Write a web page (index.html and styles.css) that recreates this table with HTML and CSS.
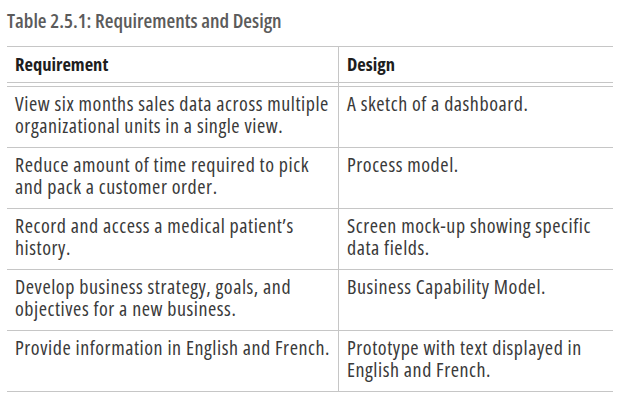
FILE: index.html
```html
<!DOCTYPE html>
<html lang="en">
<head>
<meta charset="utf-8">
<title>Table 2.5.1: Requirements and Design</title>
<link rel="stylesheet" href="styles.css">
</head>
<body>
<div class="page">
  <h1 class="caption">Table 2.5.1: Requirements and Design</h1>
  <table class="req-table">
    <thead>
      <tr><th class="col-req">Requirement</th><th class="col-des">Design</th></tr>
      <tr class="spacer"><td></td><td></td></tr>
    </thead>
    <tbody>
      <tr><td>View six months sales data across multiple organizational units in a single view.</td><td>A sketch of a dashboard.</td></tr>
      <tr><td>Reduce amount of time required to pick and pack a customer order.</td><td>Process model.</td></tr>
      <tr><td>Record and access a medical patient’s history.</td><td>Screen mock-up showing specific data fields.</td></tr>
      <tr><td>Develop business strategy, goals, and objectives for a new business.</td><td>Business Capability Model.</td></tr>
      <tr><td>Provide information in English and French.</td><td>Prototype with text displayed in English and French.</td></tr>
    </tbody>
  </table>
</div>
</body>
</html>
```
FILE: styles.css
```css
html, body { margin: 0; padding: 0; background: #fff; }
.page {
  padding: 7px 13px 0 7px;
  font-family: "Open Sans", "Noto Sans", sans-serif;
}
.caption {
  margin: 0 0 11px 0;
  font-size: 20px;
  line-height: 28px;
  font-weight: 600;
  font-stretch: 75%;
  color: #5b5b5b;
}
.req-table {
  width: 606px;
  border-collapse: collapse;
  border-top: 1.5px solid #c6c6c6;
}
.req-table th,
.req-table td {
  text-align: left;
  vertical-align: top;
  padding: 6px 3px 10px 8px;
  font-size: 20px;
  line-height: 22px;
  font-stretch: 75%;
  letter-spacing: 0.55px;
  border-bottom: 1.5px solid #c6c6c6;
}
.req-table th + th,
.req-table td + td { border-left: 1.5px solid #c6c6c6; }
.req-table th {
  font-size: 18.5px;
  font-weight: 700;
  letter-spacing: 0;
  color: #1e1e1e;
  padding-top: 6px;
  padding-bottom: 7px;
}
.req-table .col-req { width: 320px; }
.req-table td { color: #3a3a3a; height: 44px; }
.req-table .spacer td { height: 3px; padding: 0; }
```
